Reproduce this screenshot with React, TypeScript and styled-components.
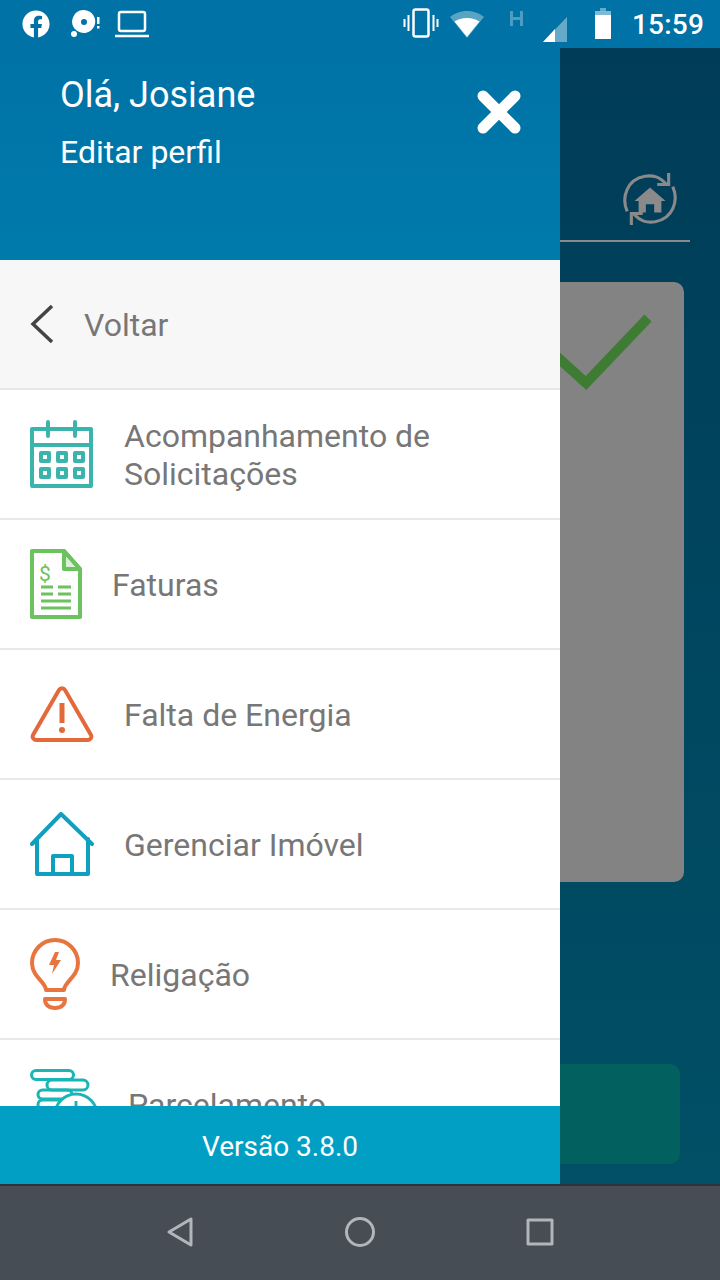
import React from 'react';
import styled, { createGlobalStyle } from 'styled-components';
import { FaFacebook } from 'react-icons/fa';

const GlobalStyle = createGlobalStyle`
  html, body {
    margin: 0;
    padding: 0;
    background: #474d54;
  }
  * {
    box-sizing: border-box;
  }
`;

const Phone = styled.div`
  width: 720px;
  height: 1280px;
  display: flex;
  flex-direction: column;
  overflow: hidden;
  font-family: Roboto, 'Liberation Sans', sans-serif;
`;

const StatusBar = styled.div`
  height: 48px;
  flex-shrink: 0;
  background: #0072a6;
  display: flex;
  align-items: center;
  justify-content: space-between;
  padding: 0 16px 0 22px;
  color: #fff;
`;

const StatusGroup = styled.div`
  display: flex;
  align-items: center;
`;

const Clock = styled.span`
  font-size: 28px;
  font-weight: 500;
  margin-left: 20px;
  letter-spacing: 0.2px;
`;

const Stage = styled.div`
  position: relative;
  flex: 1;
  min-height: 0;
`;

const Backdrop = styled.div`
  height: 100%;
  padding-left: 36px;
  background: linear-gradient(180deg, #003c58 0%, #005066 100%);
`;

const BackdropHeader = styled.div`
  height: 194px;
  margin-right: 30px;
  padding-right: 12px;
  border-bottom: 2px solid #8a8a8a;
  display: flex;
  align-items: flex-end;
  justify-content: flex-end;
  padding-bottom: 12px;
`;

const ResultCard = styled.div`
  height: 600px;
  margin-top: 40px;
  margin-right: 36px;
  padding: 32px 32px 0 0;
  background: #838383;
  border-radius: 10px;
  display: flex;
  justify-content: flex-end;
  align-items: flex-start;
`;

const ConfirmButton = styled.div`
  height: 100px;
  margin-top: 182px;
  margin-right: 40px;
  background: #02605f;
  border-radius: 10px;
`;

const Drawer = styled.aside`
  position: absolute;
  top: 0;
  left: 0;
  bottom: 0;
  width: 560px;
  display: flex;
  flex-direction: column;
  background: #fff;
`;

const DrawerHeader = styled.header`
  height: 212px;
  flex-shrink: 0;
  padding: 27px 39px 0 60px;
  background: linear-gradient(180deg, #0072a6 0%, #007bab 100%);
  color: #fff;
  display: flex;
  justify-content: space-between;
  align-items: flex-start;
`;

const Greeting = styled.div`
  font-size: 36px;
  line-height: 40px;
`;

const EditProfile = styled.div`
  font-size: 32px;
  line-height: 38px;
  margin-top: 18px;
`;

const CloseButton = styled.div`
  margin-top: 15px;
  line-height: 0;
`;

const BackRow = styled.div`
  height: 130px;
  flex-shrink: 0;
  padding-left: 30px;
  background: #f7f7f7;
  border-bottom: 2px solid #e8e8e8;
  display: flex;
  align-items: center;
  gap: 30px;
`;

const MenuList = styled.div`
  flex: 1;
  min-height: 0;
  overflow: hidden;
`;

const MenuItem = styled.div`
  height: 130px;
  padding-left: 30px;
  border-bottom: 2px solid #e8e8e8;
  display: flex;
  align-items: center;
  gap: 30px;
  & > svg {
    flex-shrink: 0;
  }
`;

const Label = styled.span`
  padding-top: 2px;
  font-size: 32px;
  line-height: 38px;
  color: #777;
`;

const DrawerFooter = styled.footer`
  height: 78px;
  flex-shrink: 0;
  padding-top: 2px;
  background: #009fc3;
  color: #fff;
  font-size: 28px;
  display: flex;
  align-items: center;
  justify-content: center;
`;

const NavBar = styled.nav`
  height: 96px;
  flex-shrink: 0;
  background: #474d54;
  border-top: 2px solid #2d3338;
  display: flex;
  align-items: center;
  justify-content: center;
  gap: 150px;
  padding-bottom: 2px;
`;

const DiscIcon = () => (
  <svg width="32" height="28" viewBox="0 0 32 28" fill="#fff" style={{ marginLeft: 20 }}>
    <path fillRule="evenodd" d="M14 0a11.500 11.500 0 1 1-8 20A11.500 11.500 0 0 1 14 0zm0 9a3 3 0 1 0 0 6 3 3 0 0 0 0-6z" />
    <circle cx="4" cy="24" r="3" />
    <rect x="27" y="7" width="2.500" height="7" />
    <rect x="27" y="16" width="2.500" height="2.500" />
  </svg>
);

const LaptopIcon = () => (
  <svg width="36" height="28" viewBox="0 0 36 28" fill="none" stroke="#fff" strokeWidth="2.500" style={{ marginLeft: 12 }}>
    <rect x="5" y="2" width="26" height="19" rx="2" />
    <path d="M1 26h34" />
  </svg>
);

const VibrateIcon = () => (
  <svg width="36" height="32" viewBox="0 0 36 32" fill="none" stroke="#fff" strokeWidth="2.500">
    <rect x="10.500" y="1.500" width="15" height="27" rx="2" />
    <path d="M5.500 7v16M1.500 11v8M30.500 7v16M34.500 11v8" strokeWidth="2" />
  </svg>
);

const WifiIcon = () => (
  <svg width="36" height="28" viewBox="0 0 36 28" fill="#fff" style={{ marginLeft: 10 }}>
    <path opacity="0.35" d="M18 1C11 1 5.500 3.400 1 7l17 21L35 7C30.500 3.400 25 1 18 1z" />
    <path d="M18 27L5.500 11.500C9 9.200 13 8 18 8s9 1.200 12.500 3.500z" />
  </svg>
);

const NetworkIcon = () => (
  <svg width="60" height="40" viewBox="0 0 60 40" fill="#fff" style={{ marginLeft: 22 }}>
    <path opacity="0.3" d="M3 7h3v6h7V7h3v15h-3v-6H6v6H3z" />
    <path opacity="0.4" d="M60 13v25H36z" />
    <path d="M48 25v13H36z" />
  </svg>
);

const BatteryIcon = () => (
  <svg width="18" height="32" viewBox="0 0 18 32" fill="#fff" style={{ marginLeft: 27 }}>
    <path opacity="0.4" d="M6 0h6v3H6z" />
    <path opacity="0.5" d="M1 3h16v6H1z" />
    <path d="M1 7h16v24H1z" />
  </svg>
);

const CloseIcon = () => (
  <svg width="44" height="44" viewBox="0 0 44 44" stroke="#fff" strokeWidth="11" strokeLinecap="round">
    <path d="M6 6l32 32M38 6L6 38" />
  </svg>
);

const HomeSyncIcon = () => (
  <svg width="56" height="58" viewBox="0 0 54 56" fill="none" stroke="#8a8a8a" strokeWidth="3">
    <path d="M5 40C-1 26 5 9 22 6c8-1 14 0 21 8" />
    <path d="M34 14h11V3" />
    <path d="M49 16c6 14 0 31-17 34-8 1-14 0-21-8" />
    <path d="M20 42H9v11" />
    <path fill="#8a8a8a" stroke="none" d="M27 17l15 13h-4v11h-7v-8h-8v8h-7V30h-4z" />
  </svg>
);

const CheckIcon = () => (
  <svg width="100" height="76" viewBox="0 0 100 76" fill="none" stroke="#3f7c33" strokeWidth="10">
    <path d="M2 40l32 29L96 4" />
  </svg>
);

const BackIcon = () => (
  <svg width="24" height="40" viewBox="0 0 24 40" fill="none" stroke="#444" strokeWidth="3.500">
    <path d="M22 2L3 20l19 18" />
  </svg>
);

const CalendarIcon = () => (
  <svg width="64" height="68" viewBox="0 0 64 68" fill="none" stroke="#3cb4ae" strokeWidth="4" strokeLinejoin="round">
    <rect x="2" y="9" width="59" height="57" />
    <path d="M2 25h59" />
    <path strokeWidth="4" strokeLinecap="round" d="M18 2v14M45 2v14" />
    <path strokeWidth="4" d="M11 33h8v8h-8zM28 33h8v8h-8zM45 33h8v8h-8zM11 49h8v8h-8zM28 49h8v8h-8zM45 49h8v8h-8z" />
  </svg>
);

const InvoiceIcon = () => (
  <svg width="52" height="70" viewBox="0 0 52 70" fill="none" stroke="#6cc25e" strokeWidth="4" strokeLinejoin="round">
    <path d="M2 2h32l16 18v48H2z" />
    <path fill="#6cc25e" fillOpacity="0.25" d="M34 2v18h16z" />
    <text x="9" y="32" fontFamily="Roboto, sans-serif" fontSize="21" fontWeight="400" fill="#6cc25e" stroke="none">$</text>
    <path strokeWidth="3" d="M11 38h12M28 38h13M11 45h12M28 45h13M11 52h30M11 59h30" />
  </svg>
);

const WarningIcon = () => (
  <svg width="64" height="56" viewBox="0 0 64 56" fill="none" stroke="#e3683a" strokeWidth="4" strokeLinejoin="round">
    <path d="M29 4a3.500 3.500 0 0 1 6 0L61 49a3.500 3.500 0 0 1-3 5H6a3.500 3.500 0 0 1-3-5z" />
    <path strokeWidth="5" d="M32 17v20" />
    <circle cx="32" cy="44" r="3" fill="#e3683a" stroke="none" />
  </svg>
);

const HouseIcon = () => (
  <svg width="64" height="64" viewBox="0 0 64 64" fill="none" stroke="#0fa0c0" strokeWidth="4" strokeLinecap="round" strokeLinejoin="round">
    <path d="M2 32L31 2l31 30" />
    <path d="M7 27v35h51V27" />
    <path d="M23 62V44h19v18" />
  </svg>
);

const BulbIcon = () => (
  <svg width="50" height="72" viewBox="0 0 50 72" fill="none" stroke="#e8743f" strokeWidth="4" strokeLinejoin="round">
    <path d="M16 52c0-8-14-13-14-27a23 23 0 0 1 46 0c0 14-14 19-14 27z" />
    <path d="M15 61h20c0 6-4 9-10 9s-10-3-10-9z" />
    <path fill="#e8743f" stroke="none" d="M25 14l-6 13h5l-2 9 9-14h-5l3-8z" />
  </svg>
);

const CoinsIcon = () => (
  <svg width="68" height="70" viewBox="0 0 68 70" fill="none" stroke="#1bb5b5" strokeWidth="3">
    <rect x="1.500" y="1.500" width="42" height="9" rx="4.500" />
    <rect x="17" y="11" width="41" height="10" rx="5" />
    <rect x="8" y="21" width="34" height="9" rx="4.500" />
    <rect x="8" y="31" width="30" height="9" rx="4.500" />
    <circle cx="46" cy="46" r="21" fill="#fff" />
    <path d="M46 32v14l8 6" />
  </svg>
);

const BackNavIcon = () => (
  <svg width="28" height="32" viewBox="0 0 28 32" fill="none" stroke="#b0b6ba" strokeWidth="3" strokeLinejoin="round">
    <path d="M25 3v26L3 16z" />
  </svg>
);

const HomeNavIcon = () => (
  <svg width="32" height="32" viewBox="0 0 32 32" fill="none" stroke="#b0b6ba" strokeWidth="3">
    <circle cx="16" cy="16" r="13.500" />
  </svg>
);

const RecentsNavIcon = () => (
  <svg width="28" height="28" viewBox="0 0 28 28" fill="none" stroke="#b0b6ba" strokeWidth="3" strokeLinejoin="round">
    <rect x="2" y="2" width="24" height="24" />
  </svg>
);

const menuItems = [
  { icon: <CalendarIcon />, label: <>Acompanhamento de<br />Solicitações</> },
  { icon: <InvoiceIcon />, label: 'Faturas' },
  { icon: <WarningIcon />, label: 'Falta de Energia' },
  { icon: <HouseIcon />, label: 'Gerenciar Imóvel' },
  { icon: <BulbIcon />, label: 'Religação' },
  { icon: <CoinsIcon />, label: 'Parcelamento' },
];

const App = () => {
  return (
    <Phone>
      <GlobalStyle />
      <StatusBar>
        <StatusGroup>
          <FaFacebook size={28} />
          <DiscIcon />
          <LaptopIcon />
        </StatusGroup>
        <StatusGroup>
          <VibrateIcon />
          <WifiIcon />
          <NetworkIcon />
          <BatteryIcon />
          <Clock>15:59</Clock>
        </StatusGroup>
      </StatusBar>

      <Stage>
        <Backdrop>
          <BackdropHeader>
            <HomeSyncIcon />
          </BackdropHeader>
          <ResultCard>
            <CheckIcon />
          </ResultCard>
          <ConfirmButton />
        </Backdrop>

        <Drawer>
          <DrawerHeader>
            <div>
              <Greeting>Olá, Josiane</Greeting>
              <EditProfile>Editar perfil</EditProfile>
            </div>
            <CloseButton>
              <CloseIcon />
            </CloseButton>
          </DrawerHeader>
          <BackRow>
            <BackIcon />
            <Label>Voltar</Label>
          </BackRow>
          <MenuList>
            {menuItems.map((item, index) => (
              <MenuItem key={index}>
                {item.icon}
                <Label>{item.label}</Label>
              </MenuItem>
            ))}
          </MenuList>
          <DrawerFooter>Versão 3.8.0</DrawerFooter>
        </Drawer>
      </Stage>

      <NavBar>
        <BackNavIcon />
        <HomeNavIcon />
        <RecentsNavIcon />
      </NavBar>
    </Phone>
  );
};

export default App;
